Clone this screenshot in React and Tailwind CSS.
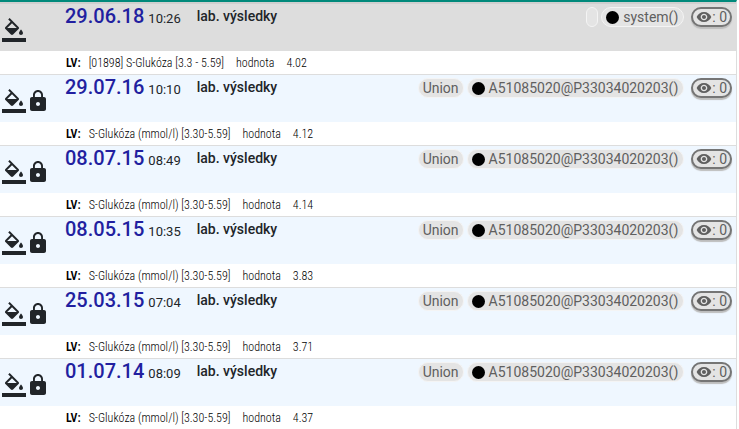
import React from 'react';

const records = [
  { date: '29.06.18', time: '10:26', test: '[01898] S-Glukóza [3.3 - 5.59]', value: '4.02', insurer: '', author: 'system()', locked: false },
  { date: '29.07.16', time: '10:10', test: 'S-Glukóza (mmol/l) [3.30-5.59]', value: '4.12', insurer: 'Union', author: 'A51085020@P33034020203()', locked: true },
  { date: '08.07.15', time: '08:49', test: 'S-Glukóza (mmol/l) [3.30-5.59]', value: '4.14', insurer: 'Union', author: 'A51085020@P33034020203()', locked: true },
  { date: '08.05.15', time: '10:35', test: 'S-Glukóza (mmol/l) [3.30-5.59]', value: '3.83', insurer: 'Union', author: 'A51085020@P33034020203()', locked: true },
  { date: '25.03.15', time: '07:04', test: 'S-Glukóza (mmol/l) [3.30-5.59]', value: '3.71', insurer: 'Union', author: 'A51085020@P33034020203()', locked: true },
  { date: '01.07.14', time: '08:09', test: 'S-Glukóza (mmol/l) [3.30-5.59]', value: '4.37', insurer: 'Union', author: 'A51085020@P33034020203()', locked: true },
];

function FillIcon() {
  return (
    <svg className="w-6 h-6" viewBox="0 0 24 24" fill="currentColor">
      <path d="M16.56 8.94L7.62 0 6.21 1.41l2.38 2.38-5.15 5.15c-.59.59-.59 1.54 0 2.12l5.5 5.5c.29.29.68.44 1.06.44s.77-.15 1.06-.44l5.5-5.5c.59-.58.59-1.53 0-2.12zM5.21 10L10 5.21 14.79 10H5.21zM19 11.5s-2 2.17-2 3.5c0 1.1.9 2 2 2s2-.9 2-2c0-1.33-2-3.5-2-3.5z" />
      <path d="M0 20h24v4H0z" />
    </svg>
  );
}

function LockIcon() {
  return (
    <svg className="w-6 h-6" viewBox="0 0 24 24" fill="currentColor">
      <path d="M18 8h-1V6c0-2.76-2.24-5-5-5S7 3.24 7 6v2H6c-1.1 0-2 .9-2 2v10c0 1.1.9 2 2 2h12c1.1 0 2-.9 2-2V10c0-1.1-.9-2-2-2zm-6 9c-1.1 0-2-.9-2-2s.9-2 2-2 2 .9 2 2-.9 2-2 2zm3.1-9H8.9V6c0-1.71 1.39-3.1 3.1-3.1 1.71 0 3.1 1.39 3.1 3.1v2z" />
    </svg>
  );
}

function EyeIcon() {
  return (
    <svg className="w-4 h-4" viewBox="0 0 24 24" fill="currentColor">
      <path d="M12 4.5C7 4.5 2.73 7.61 1 12c1.73 4.39 6 7.5 11 7.5s9.27-3.11 11-7.5c-1.73-4.39-6-7.5-11-7.5zM12 17c-2.76 0-5-2.24-5-5s2.24-5 5-5 5 2.24 5 5-2.24 5-5 5zm0-8c-1.66 0-3 1.34-3 3s1.34 3 3 3 3-1.34 3-3-1.34-3-3-3z" />
    </svg>
  );
}

function Chip({ children }) {
  return (
    <span className="flex items-center h-5 min-w-3 px-1 border border-[#f4f4f4] rounded-full bg-[#e4e4e4] text-sm text-[#5f5f5f]">
      {children}
    </span>
  );
}

function Record({ record }) {
  return (
    <article className="border-b border-[#dddddd]">
      <header className={`flex items-start h-[47px] ${record.locked ? 'bg-[#eff7ff]' : 'bg-[#dddddd]'}`}>
        <div className="flex w-[65px] pl-[2px] pt-[14px] shrink-0">
          <button type="button" aria-label="Farba"><FillIcon /></button>
          {record.locked && <button type="button" aria-label="Zamknuté"><LockIcon /></button>}
        </div>
        <div className="flex items-start">
          <div className="flex items-baseline">
            <h2 className="text-xl leading-6 font-medium text-[#221fa0]">{record.date}</h2>
            <time className="ml-1 text-[13px] leading-6">{record.time}</time>
          </div>
          <span className="ml-4 text-sm leading-6 font-medium">lab. výsledky</span>
        </div>
        <div className="flex items-center ml-auto pr-1 pt-[3px]">
          <div className="flex gap-[3px] mr-[7px]">
            <Chip>{record.insurer}</Chip>
            <Chip>
              <span className="w-[13px] h-[13px] mr-1 rounded-full bg-black" />
              <span className="pr-px">{record.author}</span>
            </Chip>
          </div>
          <button type="button" aria-label="Zobrazenia: 0" className="flex items-center h-5 px-[3px] border-2 border-[#757575] rounded-full bg-[#e4e4e4] text-sm text-[#5f5f5f] shadow-[0_2px_1px_#bdbdbd]">
            <EyeIcon />
            <span>: 0</span>
          </button>
        </div>
      </header>
      <div className="flex h-[23px] items-center pl-[66px] gap-3 bg-white font-['Roboto_Condensed',Roboto,sans-serif] text-xs font-light text-black">
        <b className="-mr-1 font-semibold">LV:</b>
        <span>{record.test}</span>
        <span>hodnota</span>
        <span>{record.value}</span>
      </div>
    </article>
  );
}

export default function App() {
  return (
    <div className="h-screen overflow-hidden bg-white pr-[2px] font-[Roboto,sans-serif] text-[#212529]">
      <main className="border-t-2 border-r border-t-[#00897b] border-r-[#dddddd]">
        <div className="h-[2px] bg-[#cfcfcf]" />
        {records.map((record) => (
          <Record key={record.date} record={record} />
        ))}
      </main>
    </div>
  );
}
